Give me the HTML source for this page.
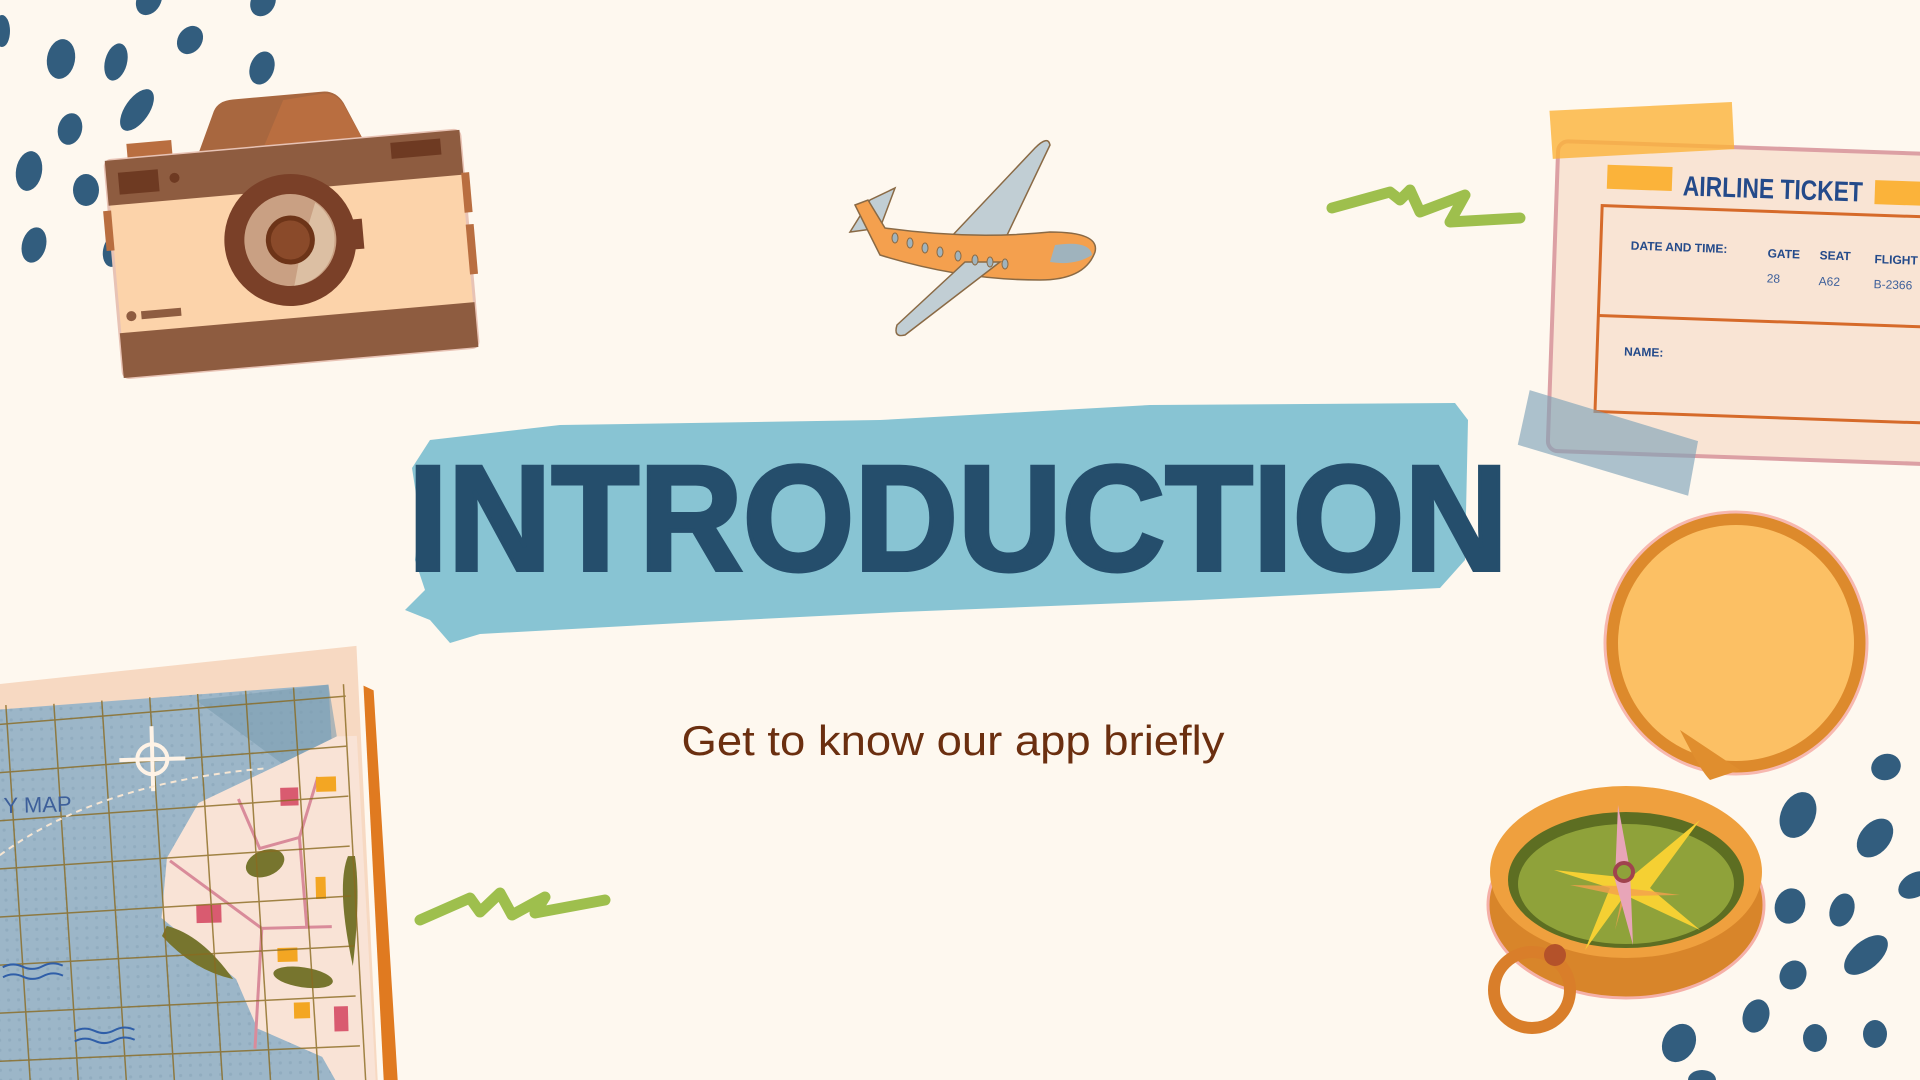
<!DOCTYPE html>
<html><head><meta charset="utf-8"><style>
html,body{margin:0;padding:0;background:#fef8ef;}
svg{display:block;}
</style></head><body>
<svg width="1920" height="1080" viewBox="0 0 1920 1080" xmlns="http://www.w3.org/2000/svg">
<defs>
<pattern id="dots" width="10" height="10" patternUnits="userSpaceOnUse"><circle cx="5" cy="5" r="1.6" fill="#6f8fa6" opacity="0.5"/></pattern>
</defs>
<rect width="1920" height="1080" fill="#fef8ef"/>
<g fill="#325d7e">
<ellipse cx="149" cy="0" rx="12" ry="16" transform="rotate(30 149 0)"/>
<ellipse cx="263" cy="2" rx="12" ry="15" transform="rotate(30 263 2)"/>
<ellipse cx="2" cy="31" rx="8" ry="16"/>
<ellipse cx="61" cy="59" rx="14" ry="20" transform="rotate(10 61 59)"/>
<ellipse cx="116" cy="62" rx="11" ry="19" transform="rotate(15 116 62)"/>
<ellipse cx="190" cy="40" rx="12" ry="15" transform="rotate(35 190 40)"/>
<ellipse cx="262" cy="68" rx="12" ry="17" transform="rotate(20 262 68)"/>
<ellipse cx="137" cy="110" rx="12" ry="24" transform="rotate(35 137 110)"/>
<ellipse cx="70" cy="129" rx="12" ry="16" transform="rotate(15 70 129)"/>
<ellipse cx="29" cy="171" rx="13" ry="20" transform="rotate(10 29 171)"/>
<ellipse cx="86" cy="190" rx="13" ry="16"/>
<ellipse cx="34" cy="245" rx="12" ry="18" transform="rotate(15 34 245)"/>
<ellipse cx="113" cy="251" rx="10" ry="16" transform="rotate(10 113 251)"/>
<ellipse cx="1886" cy="767" rx="15" ry="13" transform="rotate(-20 1886 767)"/>
<ellipse cx="1798" cy="815" rx="17" ry="24" transform="rotate(25 1798 815)"/>
<ellipse cx="1875" cy="838" rx="15" ry="22" transform="rotate(40 1875 838)"/>
<ellipse cx="1915" cy="885" rx="12" ry="18" transform="rotate(60 1915 885)"/>
<ellipse cx="1790" cy="906" rx="15" ry="18" transform="rotate(20 1790 906)"/>
<ellipse cx="1842" cy="910" rx="12" ry="17" transform="rotate(20 1842 910)"/>
<ellipse cx="1866" cy="955" rx="14" ry="26" transform="rotate(50 1866 955)"/>
<ellipse cx="1793" cy="975" rx="13" ry="15" transform="rotate(30 1793 975)"/>
<ellipse cx="1756" cy="1016" rx="13" ry="17" transform="rotate(20 1756 1016)"/>
<ellipse cx="1815" cy="1038" rx="12" ry="14"/>
<ellipse cx="1875" cy="1034" rx="12" ry="14"/>
<ellipse cx="1679" cy="1043" rx="16" ry="20" transform="rotate(30 1679 1043)"/>
<ellipse cx="1702" cy="1080" rx="14" ry="10"/>
</g>
<g transform="rotate(-5 290 236)">
<path d="M205 148 L225 105 Q230 95 245 95 L335 95 Q348 95 355 108 L372 148 Z" fill="#a8673f"/>
<path d="M270 148 L295 100 L335 97 Q348 97 355 110 L372 148 Z" fill="#b96e40"/>
<rect x="135" y="130" width="45" height="25" fill="#b96e40"/>
<rect x="112" y="145" width="356" height="218" rx="6" fill="#fcd3aa" stroke="#e8c3b5" stroke-width="3"/>
<rect x="112" y="145" width="356" height="45" fill="#8e5c40"/>
<rect x="112" y="318" width="356" height="45" fill="#8e5c40"/>
<rect x="124" y="158" width="40" height="22" fill="#6e3a22"/>
<rect x="398" y="152" width="50" height="16" fill="#6e3a22"/>
<circle cx="180" cy="168" r="5" fill="#6e3a22"/>
<rect x="106" y="195" width="8" height="40" fill="#b96e40"/>
<rect x="466" y="188" width="8" height="40" fill="#b96e40"/>
<rect x="466" y="240" width="8" height="50" fill="#b96e40"/>
<circle cx="125" cy="302" r="5" fill="#8e5c40"/>
<rect x="135" y="298" width="40" height="8" fill="#8e5c40"/>
<circle cx="290" cy="240" r="66" fill="#7a4028"/>
<circle cx="290" cy="240" r="46" fill="#c9a083"/>
<path d="M318 205 A46 46 0 0 1 290 286 L 300 250 Z" fill="#dcbfa3"/>
<circle cx="290" cy="240" r="22" fill="#8a4a2a" stroke="#6d3418" stroke-width="5"/>
<rect x="353" y="225" width="10" height="30" fill="#7a4028"/>
</g>
<g>
<path d="M950 238 L1035 148 Q1048 135 1050 145 L1000 250 Z" fill="#c1ced4" stroke="#8a6a45" stroke-width="1.5"/>
<path d="M880 228 L895 188 L870 200 L850 232 Z" fill="#c1ced4" stroke="#8a6a45" stroke-width="1.5"/>
<path d="M855 205 L868 200 L885 228 Q970 240 1050 232 Q1100 232 1095 252 Q1085 280 1040 280 Q960 280 880 255 Z" fill="#f4a04e" stroke="#8a6a45" stroke-width="1.5"/>
<path d="M1055 245 Q1090 240 1092 255 Q1075 266 1050 262 Z" fill="#9fb3bd"/>
<path d="M965 262 L1000 262 L905 335 Q893 338 897 325 Z" fill="#c1ced4" stroke="#8a6a45" stroke-width="1.5"/>
<g fill="#9fb3bd" stroke="#8a6a45" stroke-width="1">
<ellipse cx="895" cy="238" rx="3" ry="5"/><ellipse cx="910" cy="243" rx="3" ry="5"/>
<ellipse cx="925" cy="248" rx="3" ry="5"/><ellipse cx="940" cy="252" rx="3" ry="5"/>
<ellipse cx="958" cy="256" rx="3" ry="5"/><ellipse cx="975" cy="260" rx="3" ry="5"/>
<ellipse cx="990" cy="262" rx="3" ry="5"/><ellipse cx="1005" cy="264" rx="3" ry="5"/>
</g>
</g>
<g fill="none" stroke="#9ebf4d" stroke-width="11" stroke-linecap="round" stroke-linejoin="round">
<polyline points="1332,208 1390,192 1400,200 1410,190 1420,212 1465,195 1450,222 1520,218"/>
<polyline points="420,920 470,898 480,912 500,893 512,915 545,897 535,913 605,900"/>
</g>
<g transform="rotate(2 1530 95)">
<rect x="1560" y="140" width="400" height="310" rx="10" fill="#f9e4d4" stroke="#dca0a4" stroke-width="4"/>
<polygon points="1550,110 1732,95 1736,142 1555,158" fill="#fbb33a" opacity="0.8"/>
<rect x="1610" y="162" width="65" height="24" fill="#fbb33a"/>
<rect x="1878" y="168" width="60" height="24" fill="#fbb33a"/>
<text x="1686" y="190" font-family="Liberation Sans, sans-serif" font-weight="bold" font-size="28" fill="#244a8a" textLength="180" lengthAdjust="spacingAndGlyphs">AIRLINE TICKET</text>
<rect x="1606" y="203" width="340" height="206" fill="none" stroke="#d66a2a" stroke-width="3"/>
<line x1="1606" y1="313" x2="1946" y2="313" stroke="#d66a2a" stroke-width="3"/>
<g font-family="Liberation Sans, sans-serif" font-size="12" font-weight="bold" fill="#244a8a">
<text x="1636" y="246">DATE AND TIME:</text>
<text x="1773" y="249">GATE</text>
<text x="1825" y="249">SEAT</text>
<text x="1880" y="251">FLIGHT</text>
<text x="1633" y="352">NAME:</text>
</g>
<g font-family="Liberation Sans, sans-serif" font-size="12" fill="#3d5f9a">
<text x="1773" y="274">28</text>
<text x="1825" y="275">A62</text>
<text x="1880" y="276">B-2366</text>
</g>
<polygon points="1540,390 1710,435 1702,490 1530,445" fill="#7fa3b8" opacity="0.65"/>
</g>
<g transform="rotate(-1.5 200 860)">
<polygon points="-10,680 362,650 372,1090 -10,1090" fill="#f7d9c2"/>
<polygon points="368,690 378,695 392,1090 378,1090" fill="#e07a20"/>
<polygon points="-10,705 333,688 345,1090 -10,1090" fill="#9cb6c8"/>
<polygon points="-10,705 333,688 345,1090 -10,1090" fill="url(#dots)" opacity="0.5"/>
<polygon points="200,700 333,688 340,740 290,770" fill="#7c9cb1" opacity="0.6"/>
<polygon points="340,740 290,763 200,803 167,857 160,917 233,980 253,1030 317,1060 333,1090 370,1090 360,740" fill="#f9e3d6"/>
<g stroke="#d98b9a" stroke-width="3" fill="none">
<path d="M170 860 L260 930 L330 930"/><path d="M240 800 L260 850 L300 840 L320 780"/><path d="M260 930 L250 1050"/><path d="M300 840 L305 930"/>
</g>
<g fill="#77752e">
<ellipse cx="265" cy="865" rx="20" ry="13" transform="rotate(-20 265 865)"/>
<path d="M165 925 Q200 935 230 980 Q190 970 160 935 Z"/>
<ellipse cx="300" cy="980" rx="30" ry="10" transform="rotate(10 300 980)"/>
<path d="M348 860 Q335 890 350 970 Q360 900 355 860 Z"/>
</g>
<g fill="#d95b70"><rect x="282" y="790" width="18" height="18"/><rect x="195" y="905" width="25" height="18"/><rect x="330" y="1010" width="14" height="25"/></g>
<g fill="#f3a623"><rect x="318" y="780" width="20" height="15"/><rect x="315" y="880" width="10" height="22"/><rect x="275" y="950" width="20" height="14"/><rect x="290" y="1005" width="16" height="16"/></g>
<g stroke="#8a6a20" stroke-width="1.5" opacity="0.8">
<line x1="10" y1="700" x2="25" y2="1090"/><line x1="58" y1="700" x2="73" y2="1090"/><line x1="106" y1="698" x2="121" y2="1090"/><line x1="154" y1="696" x2="169" y2="1090"/><line x1="202" y1="694" x2="217" y2="1090"/><line x1="250" y1="692" x2="265" y2="1090"/><line x1="298" y1="690" x2="313" y2="1090"/><line x1="348" y1="688" x2="360" y2="1090"/>
<line x1="-10" y1="720" x2="350" y2="700"/><line x1="-10" y1="768" x2="350" y2="750"/><line x1="-10" y1="816" x2="350" y2="800"/><line x1="-10" y1="864" x2="350" y2="850"/><line x1="-10" y1="912" x2="350" y2="900"/><line x1="-10" y1="960" x2="352" y2="950"/><line x1="-10" y1="1008" x2="352" y2="1000"/><line x1="-10" y1="1056" x2="355" y2="1050"/>
</g>
<g stroke="#fff3e6" stroke-width="4" fill="none"><circle cx="155" cy="758" r="15"/><path d="M155 725 L155 790 M122 758 L188 758"/></g>
<path d="M0 850 Q100 780 270 770" stroke="#f7e6d3" stroke-width="2" stroke-dasharray="6 5" fill="none"/>
<text x="5" y="808" font-family="Liberation Sans, sans-serif" font-size="22" fill="#3d5f9a">Y MAP</text>
<g stroke="#2f5ea8" stroke-width="2" fill="none"><path d="M0 962 q10 -5 20 0 t20 0 t20 0"/><path d="M0 972 q10 -5 20 0 t20 0 t20 0"/><path d="M70 1028 q10 -5 20 0 t20 0 t20 0"/><path d="M70 1038 q10 -5 20 0 t20 0 t20 0"/></g>
</g>
<g>
<circle cx="1736" cy="643" r="124" fill="#fcc064" stroke="#dd8a2c" stroke-width="12"/>
<circle cx="1736" cy="643" r="131" fill="none" stroke="#f7b8b0" stroke-width="3"/>
<path d="M1680 730 Q1700 770 1710 780 L1740 770 Z" fill="#e08e2e"/>
<ellipse cx="1626" cy="905" rx="138" ry="93" fill="#d8852a" stroke="#f5b0a8" stroke-width="3"/>
<ellipse cx="1626" cy="872" rx="136" ry="86" fill="#efa03e"/>
<ellipse cx="1626" cy="880" rx="118" ry="68" fill="#5d6e22"/>
<ellipse cx="1626" cy="884" rx="108" ry="60" fill="#8fa23a"/>
<polygon points="1554,870 1630,878 1700,820 1650,888 1700,930 1625,895 1585,950 1610,888" fill="#f5d033"/>
<polygon points="1617,840 1625,888 1680,895 1625,896 1615,930 1622,896 1570,885 1622,886" fill="#f4a04e" opacity="0.8"/>
<polygon points="1618,805 1630,870 1633,945 1615,880" fill="#e8a5b8"/>
<circle cx="1624" cy="872" r="9" fill="#8fa23a" stroke="#a0434e" stroke-width="4"/>
<circle cx="1532" cy="990" r="38" fill="none" stroke="#d97e2a" stroke-width="12"/>
<circle cx="1555" cy="955" r="11" fill="#b4522a"/>
</g>
<path d="M412 468 L430 440 L560 425 L880 420 L1150 405 L1455 403 L1468 420 L1465 560 L1440 588 L1200 600 L900 612 L700 622 L480 634 L450 643 L430 620 L405 610 L425 590 L415 560 L420 520 Z" fill="#88c4d3"/>
<text x="408" y="570" font-family="Liberation Sans, sans-serif" font-weight="bold" font-size="150" fill="#254e6c" stroke="#254e6c" stroke-width="4" textLength="1100" lengthAdjust="spacingAndGlyphs">INTRODUCTION</text>
<text x="953" y="755" text-anchor="middle" font-family="Liberation Sans, sans-serif" font-size="42" fill="#6b2f10" textLength="543" lengthAdjust="spacingAndGlyphs">Get to know our app briefly</text>
</svg>
</body></html>
